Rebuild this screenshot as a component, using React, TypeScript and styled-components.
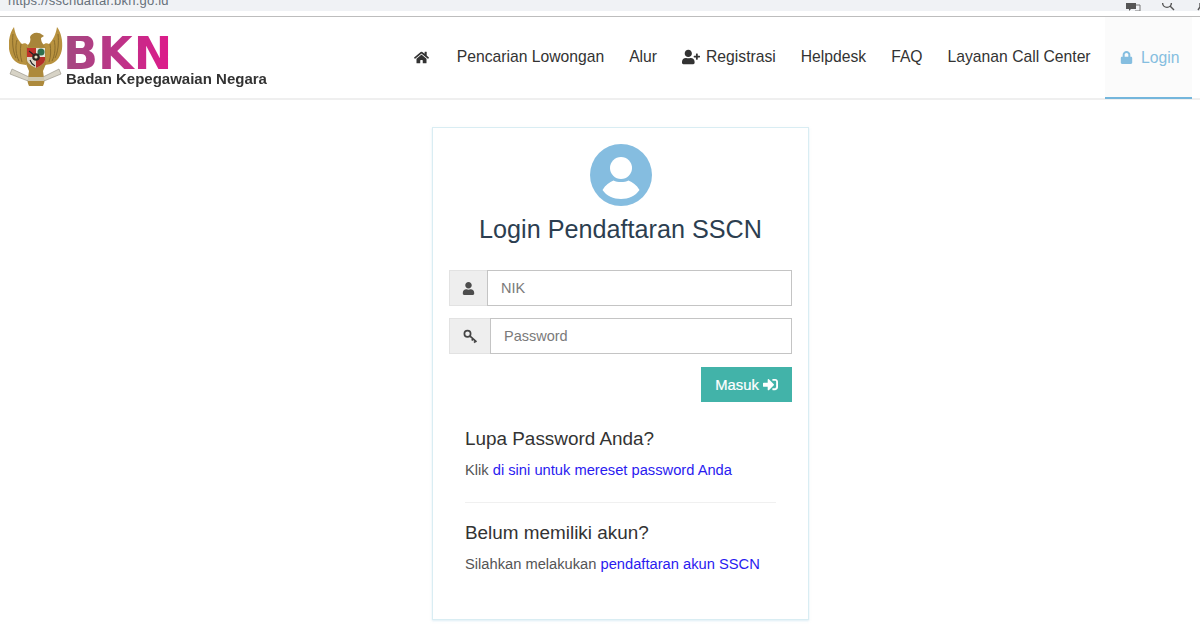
import React from "react";
import styled, { createGlobalStyle } from "styled-components";
import { FaHome, FaUserPlus, FaLock, FaUser, FaSignInAlt } from "react-icons/fa";

const Global = createGlobalStyle`
  html, body { margin: 0; padding: 0; background: #fff; }
  body { font-family: "Liberation Sans", Arial, sans-serif; color: #333; }
  * { box-sizing: border-box; }
`;

const Page = styled.div`
  width: 1200px;
  height: 630px;
  overflow: hidden;
  background: #fff;
`;

const BrowserStrip = styled.div`
  height: 11px;
  background: #f0f2f5;
  display: flex;
  justify-content: space-between;
  align-items: flex-end;
  overflow: hidden;
  padding: 0 0 4px 8px;
`;

const UrlText = styled.span`
  font-size: 13px;
  line-height: 13px;
  color: #66707a;
  letter-spacing: 0.22px;
`;

const BrowserIcons = styled.div`
  display: flex;
  align-items: flex-end;
  gap: 21px;
  margin-bottom: -4px;
  margin-right: -3px;
`;

const StripGap = styled.div`
  height: 6px;
  background: #fff;
  border-bottom: 1px solid #bdbdbd;
`;

const Navbar = styled.nav`
  height: 83px;
  background: #fff;
  border-bottom: 2px solid #efefef;
  display: flex;
  align-items: stretch;
  justify-content: space-between;
  padding: 0 8px 0 9px;
`;

const Brand = styled.a`
  display: flex;
  align-items: flex-start;
  width: 270px;
  padding-top: 10px;
`;

const BrandText = styled.div`
  display: flex;
  flex-direction: column;
  margin-left: 3px;
`;

const BrandMark = styled.span`
  font-family: "DejaVu Sans", sans-serif;
  font-size: 46px;
  line-height: 34px;
  height: 34px;
  width: 112px;
  margin: 9px 0 0 -3px;
  font-weight: 700;
  background: linear-gradient(90deg, #a34a80 0%, #bd3388 50%, #e0188a 100%);
  -webkit-background-clip: text;
  background-clip: text;
  color: transparent;
  filter: blur(0.3px);
`;

const BrandSub = styled.span`
  font-size: 15px;
  line-height: 16px;
  margin-top: 1px;
  font-weight: 700;
  color: #333;
  white-space: nowrap;
  filter: blur(0.25px);
`;

const NavList = styled.div`
  display: flex;
  align-items: stretch;
`;

const NavItem = styled.a`
  display: flex;
  align-items: center;
  gap: 6px;
  padding: 0 12.5px 1px;
  font-size: 15.7px;
  color: #333;
  white-space: nowrap;
`;

const HomeItem = styled(NavItem)`
  padding-right: 15.5px;
`;

const ActiveNavItem = styled(NavItem)`
  gap: 8px;
  margin-left: 2px;
  margin-bottom: -1px;
  padding-left: 15px;
  color: #85bee0;
  background: #fbfbfb;
  box-shadow: inset 0 -2px 0 #74b6dc;
`;

const Card = styled.main`
  width: 377px;
  height: 493px;
  margin: 27px 0 0 432px;
  border: 1px solid #d9edf3;
  box-shadow: 0 1px 2px rgba(190, 220, 235, 0.5);
  padding: 16px 16px 0;
  display: flex;
  flex-direction: column;
`;

const Avatar = styled.svg`
  width: 62px;
  height: 62px;
  align-self: center;
  display: block;
`;

const Title = styled.h1`
  margin: 8px 0 0;
  font-size: 25.2px;
  line-height: 30px;
  font-weight: 400;
  color: #2c3e50;
  text-align: center;
  white-space: nowrap;
`;

const Fields = styled.div`
  margin-top: 26px;
  display: flex;
  flex-direction: column;
  gap: 12px;
`;

const InputRow = styled.div`
  height: 36px;
  display: flex;
`;

const Addon = styled.span<{ $w: number }>`
  width: ${(p) => p.$w}px;
  background: #eee;
  border: 1px solid #e2e2e2;
  border-right: 0;
  display: flex;
  align-items: center;
  justify-content: center;
  color: #4d4d4d;
  flex: none;
`;

const Field = styled.div`
  flex: 1;
  border: 1px solid #c4c4c4;
  background: #fff;
  display: flex;
  align-items: center;
  padding-left: 13px;
  padding-bottom: 1px;
  color: #7a7a7a;
  font-size: 14.5px;
`;

const Actions = styled.div`
  display: flex;
  justify-content: flex-end;
  margin-top: 13px;
`;

const SubmitButton = styled.button`
  width: 91px;
  height: 35px;
  border: 0;
  background: #42b3a9;
  color: #fff;
  font-family: inherit;
  font-size: 14.8px;
  font-weight: 400;
  display: flex;
  align-items: center;
  justify-content: center;
  gap: 4px;
  padding: 0;
  -webkit-text-stroke: 0.2px #fff;
`;

const Section = styled.section`
  margin: 0 16px;
`;

const FirstSection = styled(Section)`
  margin-top: 26px;
`;

const SectionTitle = styled.h2`
  margin: 0;
  font-size: 18.9px;
  line-height: 22px;
  font-weight: 400;
  color: #333;
  white-space: nowrap;
`;

const SectionText = styled.p`
  margin: 10px 0 0;
  font-size: 14.7px;
  line-height: 20px;
  color: #555;
  white-space: nowrap;
`;

const TextLink = styled.a`
  color: #2a1bf0;
`;

const Divider = styled.hr`
  margin: 22px 16px 19px;
  border: 0;
  border-top: 1px solid #f0f0f0;
`;

const GarudaSvg = styled.svg`
  flex: none;
  filter: blur(0.45px);
`;

function Garuda() {
  return (
    <GarudaSvg width="54" height="60" viewBox="0 0 54 60">
      {/* wings */}
      <path d="M5 0C1 5-1 14 0 22c1 7 5 13 11 15l6 1 2-20c-2-2-4-2-6-1C9 13 6 7 5 0Z" fill="#b8923f" />
      <path d="M48 0c4 5 6 14 5 22-1 7-5 13-11 15l-6 1-2-20c2-2 4-2 6-1 4-4 7-10 8-17Z" fill="#b8923f" />
      <path d="M4 7c-1 9 0 18 3 24M8 13c-2 7-1 15 2 21M12 17c-1 6-1 12 1 18M49 7c1 9 0 18-3 24M45 13c2 7 1 15-2 21M41 17c1 6 1 12-1 18" stroke="#8a6c2c" strokeWidth="1" fill="none" />
      {/* head and neck */}
      <path d="M21 10c1-3 5-5 8-4 3 0 4 2 6 3l-3 2c0 3 1 5 3 7l1 4H18l1-4c2-2 3-5 2-8Z" fill="#a8853a" />
      {/* body and tail */}
      <path d="M17 20h20v17l-3 7 1 7c1 3 0 6-1 8H20c-1-2-2-5-1-8l1-7-3-7Z" fill="#ad8a3c" />
      {/* shield */}
      <path d="M18 21h18v12c-1 4-5 6-9 8-4-2-8-4-9-8Z" fill="#ddd8c9" />
      <path d="M18 21h9v9h-9Z" fill="#c0312a" />
      <path d="M27 30h9v3c-1 4-5 6-9 8Z" fill="#b42f28" />
      <path d="M27 21h9v9h-9Z" fill="#e6e3d8" />
      <circle cx="32" cy="25" r="3.5" fill="#2e6f4e" />
      <path d="M20 24l5 4M21 33c1 3 3 5 5 6" stroke="#222" strokeWidth="1.1" fill="none" />
      <circle cx="27" cy="30" r="3.8" fill="#2e2820" />
      <circle cx="27" cy="30" r="1.6" fill="#e9e0c3" />
      {/* ribbon */}
      <path d="M3 42l17 8-1 4L1 47Z" fill="#d7d3c6" stroke="#8f8c7e" strokeWidth=".6" />
      <path d="M50 42l-16 8 1 4 17-7Z" fill="#d7d3c6" stroke="#8f8c7e" strokeWidth=".6" />
      <path d="M19 50h16v4H19Z" fill="#cfc8ae" />
    </GarudaSvg>
  );
}

function KeyIcon() {
  return (
    <svg width="15" height="15" viewBox="0 0 14 14" fill="none" stroke="#444" strokeWidth="1.6">
      <circle cx="4.2" cy="4.4" r="2.9" />
      <path d="M6.3 6.5l6.3 5.6M9.4 9.2l-1.2 1.5M11.6 11.2l-1.2 1.5" />
    </svg>
  );
}

function AvatarIcon() {
  return (
    <Avatar viewBox="0 0 62 62">
      <circle cx="31" cy="31" r="31" fill="#85bde0" />
      <circle cx="31" cy="24" r="11" fill="#fff" />
      <path d="M12.5 46c3-5 7-8 11-9.500 4 2 11 2 15 0 4 1.500 8 4.500 11 9.500-4 6-11 9-18.500 9s-14.500-3-18.500-9Z" fill="#fff" />
    </Avatar>
  );
}

function ChromeIcons() {
  return (
    <BrowserIcons>
      <svg width="15" height="8" viewBox="0 0 15 8"><path d="M0 0h10v6H5L3 8V6H0Z" fill="#555" /><path d="M10 2h4v6h-5" fill="none" stroke="#777" /></svg>
      <svg width="14" height="8" viewBox="0 0 14 8" fill="none" stroke="#555" strokeWidth="1.4"><circle cx="5" cy="0" r="4.4" /><path d="M8 3l4 4" /></svg>
      <svg width="6" height="8" viewBox="0 0 6 8" fill="none" stroke="#555" strokeWidth="1.4"><path d="M3 0v4L1 7" /></svg>
    </BrowserIcons>
  );
}

export default function App() {
  return (
    <Page>
      <Global />
      <BrowserStrip>
        <UrlText>https://sscndaftar.bkn.go.id</UrlText>
        <ChromeIcons />
      </BrowserStrip>
      <StripGap />
      <Navbar>
        <Brand>
          <Garuda />
          <BrandText>
            <BrandMark>BKN</BrandMark>
            <BrandSub>Badan Kepegawaian Negara</BrandSub>
          </BrandText>
        </Brand>
        <NavList>
          <HomeItem><FaHome size={15} /></HomeItem>
          <NavItem>Pencarian Lowongan</NavItem>
          <NavItem>Alur</NavItem>
          <NavItem><FaUserPlus size={18} />Registrasi</NavItem>
          <NavItem>Helpdesk</NavItem>
          <NavItem>FAQ</NavItem>
          <NavItem>Layanan Call Center</NavItem>
          <ActiveNavItem><FaLock size={13} />Login</ActiveNavItem>
        </NavList>
      </Navbar>
      <Card>
        <AvatarIcon />
        <Title>Login Pendaftaran SSCN</Title>
        <Fields>
          <InputRow>
            <Addon $w={38}><FaUser size={13} /></Addon>
            <Field>NIK</Field>
          </InputRow>
          <InputRow>
            <Addon $w={41}><KeyIcon /></Addon>
            <Field>Password</Field>
          </InputRow>
        </Fields>
        <Actions>
          <SubmitButton>Masuk <FaSignInAlt size={15} /></SubmitButton>
        </Actions>
        <FirstSection>
          <SectionTitle>Lupa Password Anda?</SectionTitle>
          <SectionText>Klik <TextLink>di sini untuk mereset password Anda</TextLink></SectionText>
        </FirstSection>
        <Divider />
        <Section>
          <SectionTitle>Belum memiliki akun?</SectionTitle>
          <SectionText>Silahkan melakukan <TextLink>pendaftaran akun SSCN</TextLink></SectionText>
        </Section>
      </Card>
    </Page>
  );
}
